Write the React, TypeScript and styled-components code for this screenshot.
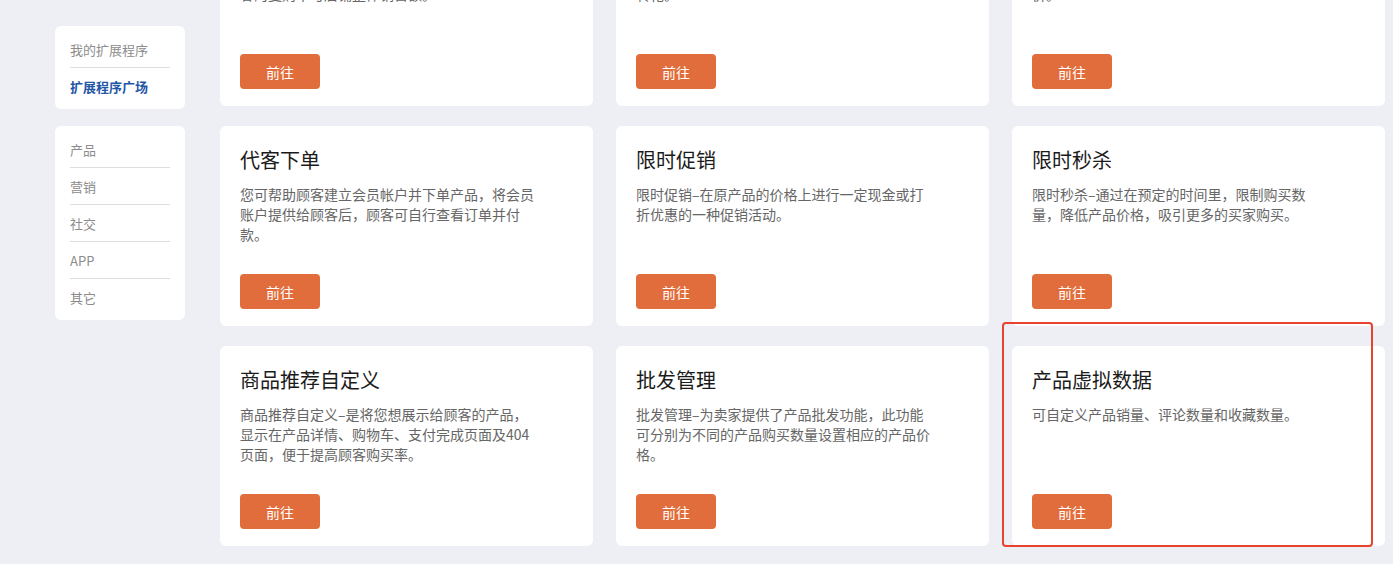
import styled, { createGlobalStyle } from "styled-components";

const GlobalStyle = createGlobalStyle`
  html, body {
    margin: 0;
    padding: 0;
    background: #eeeff4;
    font-family: "Noto Sans CJK SC", "Noto Sans", sans-serif;
    overflow: hidden;
  }
`;

const Page = styled.div`
  display: flex;
  align-items: flex-start;
  gap: 35px;
  padding: 26px 8px 0 55px;
  height: 564px;
  box-sizing: border-box;
`;

const Sidebar = styled.aside`
  width: 130px;
  flex-shrink: 0;
  display: flex;
  flex-direction: column;
  gap: 17px;
`;

const MenuCard = styled.div`
  background: #fff;
  border-radius: 6px;
  padding: 5px 15px;
`;

const MenuItem = styled.div<{ $active?: boolean }>`
  height: 36px;
  width: 100px;
  display: flex;
  align-items: center;
  font-size: 13px;
  color: ${({ $active }) => ($active ? "#1f56a6" : "#8c8c8c")};
  font-weight: ${({ $active }) => ($active ? 700 : 400)};
  border-top: 1px solid #dcdde1;

  &:first-child {
    border-top: none;
  }
`;

const Grid = styled.div`
  flex: 1;
  display: grid;
  grid-template-columns: repeat(3, 1fr);
  grid-auto-rows: 200px;
  column-gap: 23px;
  row-gap: 20px;
  margin-top: -120px;
`;

const Card = styled.div`
  position: relative;
  background: #fff;
  border-radius: 6px;
  padding: 20px 20px 17px;
  display: flex;
  flex-direction: column;
  box-sizing: border-box;
`;

const Title = styled.h3`
  margin: 0;
  font-size: 20px;
  line-height: 28px;
  font-weight: 400;
  color: #1b1b1b;
`;

const Description = styled.p`
  margin: 10px 0 0;
  flex: 1;
  max-width: 298px;
  font-size: 14px;
  line-height: 20px;
  color: #666;
`;

const GoButton = styled.button`
  width: 80px;
  height: 35px;
  border: none;
  border-radius: 4px;
  background: #e06d3b;
  color: #fff;
  font-family: inherit;
  font-size: 14px;
  cursor: pointer;
`;

const Highlight = styled.div`
  position: absolute;
  left: -10px;
  top: -24px;
  width: 371px;
  height: 225px;
  border: 2px solid #e8432e;
  border-radius: 4px;
  box-sizing: border-box;
  pointer-events: none;
`;

const apps = [
  {
    title: "会员等级",
    desc: "为不同等级的会员设置专属折扣与权益，提升顾客的复购率与店铺整体销售额。",
  },
  {
    title: "优惠券",
    desc: "创建多种类型的优惠券并发放给顾客，刺激消费转化。",
  },
  {
    title: "满减活动",
    desc: "设置满额减免或满件折扣的促销规则，提高客单价。",
  },
  {
    title: "代客下单",
    desc: "您可帮助顾客建立会员帐户并下单产品，将会员账户提供给顾客后，顾客可自行查看订单并付款。",
  },
  {
    title: "限时促销",
    desc: "限时促销–在原产品的价格上进行一定现金或打折优惠的一种促销活动。",
  },
  {
    title: "限时秒杀",
    desc: "限时秒杀–通过在预定的时间里，限制购买数量，降低产品价格，吸引更多的买家购买。",
  },
  {
    title: "商品推荐自定义",
    desc: "商品推荐自定义–是将您想展示给顾客的产品，显示在产品详情、购物车、支付完成页面及404页面，便于提高顾客购买率。",
  },
  {
    title: "批发管理",
    desc: "批发管理–为卖家提供了产品批发功能，此功能可分别为不同的产品购买数量设置相应的产品价格。",
  },
  {
    title: "产品虚拟数据",
    desc: "可自定义产品销量、评论数量和收藏数量。",
    highlighted: true,
  },
];

export default function App() {
  return (
    <>
      <GlobalStyle />
      <Page>
        <Sidebar>
          <MenuCard>
            <MenuItem>我的扩展程序</MenuItem>
            <MenuItem $active>扩展程序广场</MenuItem>
          </MenuCard>
          <MenuCard>
            {["产品", "营销", "社交", "APP", "其它"].map((item) => (
              <MenuItem key={item}>{item}</MenuItem>
            ))}
          </MenuCard>
        </Sidebar>

        <Grid>
          {apps.map((app) => (
            <Card key={app.title}>
              <Title>{app.title}</Title>
              <Description>{app.desc}</Description>
              <div>
                <GoButton>前往</GoButton>
              </div>
              {app.highlighted && <Highlight />}
            </Card>
          ))}
        </Grid>
      </Page>
    </>
  );
}
